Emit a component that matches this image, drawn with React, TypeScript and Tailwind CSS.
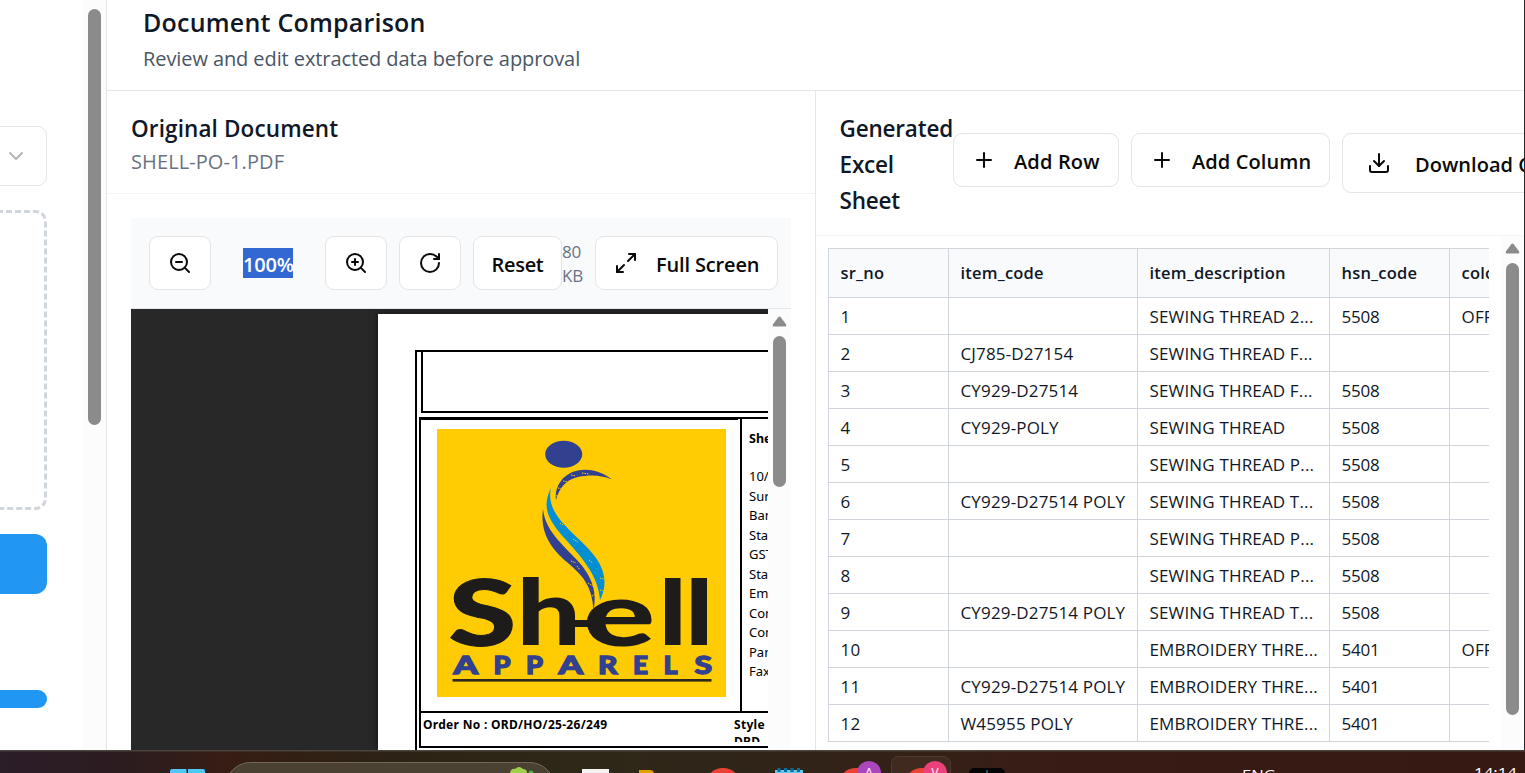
import React from "react";
import { ZoomIn, ZoomOut, RotateCw, Maximize2, Plus, Download, ChevronDown } from "lucide-react";

const rows: string[][] = [
  ["1", "", "SEWING THREAD 2...", "5508", "OFF"],
  ["2", "CJ785-D27154", "SEWING THREAD F...", "", ""],
  ["3", "CY929-D27514", "SEWING THREAD F...", "5508", ""],
  ["4", "CY929-POLY", "SEWING THREAD", "5508", ""],
  ["5", "", "SEWING THREAD P...", "5508", ""],
  ["6", "CY929-D27514 POLY", "SEWING THREAD T...", "5508", ""],
  ["7", "", "SEWING THREAD P...", "5508", ""],
  ["8", "", "SEWING THREAD P...", "5508", ""],
  ["9", "CY929-D27514 POLY", "SEWING THREAD T...", "5508", ""],
  ["10", "", "EMBROIDERY THRE...", "5401", "OFF"],
  ["11", "CY929-D27514 POLY", "EMBROIDERY THRE...", "5401", ""],
  ["12", "W45955 POLY", "EMBROIDERY THRE...", "5401", ""],
];

const heads = ["sr_no", "item_code", "item_description", "hsn_code", "color"];

function Arrow() {
  return (
    <svg width="15" height="11" viewBox="0 0 15 11" className="block shrink-0">
      <path d="M6.3 1.2Q7.5 -.2 8.7 1.2L14 8.2Q15 10.5 13 10.5H2Q0 10.5 1 8.2Z" fill="#8b8b8b" />
    </svg>
  );
}

function Btn({ className, children }: { className: string; children: React.ReactNode }) {
  return (
    <button className={"flex shrink-0 items-center rounded-[9px] border border-[#e5e5e5] bg-white text-[20px] font-semibold whitespace-nowrap text-[#0a0a0a] " + className}>
      {children}
    </button>
  );
}

function Logo() {
  return (
    <svg width="289" height="268" viewBox="437 429 289 268" className="block">
      <rect x="437" y="429" width="289" height="268" fill="#ffcb03" />
      <ellipse cx="563.7" cy="454.3" rx="18.5" ry="13.5" fill="#32418f" />
      <path d="M556 500C554 485 565 471 582 470C595 469 604 474 612 479.500C602 475.500 594 475 585 476C568 477 560 486 556 500Z" fill="#32418f" />
      <path d="M551 488C540 510 551 523 567 541C584 560 598 576 600 600C607 587 606 572 596 558C580 535 544 517 551 488Z" fill="#048fd3" />
      <path d="M543 509C540 532 550 548 568 563C582 575 592 585 593.500 610C598 590 590 574 577 560C562 544 545 530 543 509Z" fill="#32418f" />
      <path d="M556 496l3-1M558 488l5 1M563 481l5 1M571 475l5 1M582 473l7 1M571 561l5 2M577 566l3 4M588 583l5 3M592 596l4-2M560 523l3 2M573 539l5 3M589 560l4 3M600 578l4 1M600 590l5 1" stroke="#ffcb03" strokeWidth="1" strokeDasharray="1.5 1" />
      <g fill="#1d1c1a" stroke="#1d1c1a" strokeWidth="1" fontFamily="Lato" fontWeight="900">
        <text transform="translate(448.500 645.5) scale(1.35 1)" fontSize="91">S</text>
        <text transform="translate(516.500 645) scale(1.25 1)" fontSize="91" stroke="none">h</text>
        <text transform="translate(583 645.5) scale(1.5 1)" fontSize="90" stroke="none">e</text>
      </g>
      <path d="M574 620H600V627H574ZM665 578H680.500V645H665ZM691.500 578H707V645H691.500Z" fill="#1d1c1a" />
      <g fill="#32418f" stroke="#32418f" strokeWidth="1.3" fontFamily="Lato" fontWeight="900" fontSize="24.5">
        {["A", "P", "P", "A", "R", "E", "L", "S"].map((c, i) => (
          <text key={i} x={[453.500, 493.500, 526, 558.500, 598, 633, 663.500, 694.500][i]} y="674" textLength={[24.5, 17, 17, 24.5, 19.5, 15, 14, 17.5][i]} lengthAdjust="spacingAndGlyphs">{c}</text>
        ))}
      </g>
      <rect x="452.500" y="679" width="259" height="2.600" fill="#2b2720" />
    </svg>
  );
}

function Page() {
  const address = ["10/", "Sur", "Ban", "Stat", "GST", "Stat", "Ema", "Con", "Con", "Pan", "Fax"];
  return (
    <div className="mt-[5px] ml-[247px] h-[436px] w-[390px] shrink-0 overflow-hidden bg-white pt-[36px] pl-[37px] font-['Noto_Sans',sans-serif] text-[12px] text-black shadow-[0_0_8px_rgba(0,0,0,0.5)]">
      <div className="h-[420px] w-[500px] border-t-2 border-l-2 border-black pl-[2px]">
        <div className="ml-[2px] h-[61px] border-b-2 border-l-2 border-black" />
        <div className="mt-[4px] flex h-[296px] border-y-[2px] border-l-2 border-black">
          <div className="h-full w-[321px] shrink-0 border-r-2 border-black">
            <div className="h-[10px] w-[317px] border-t border-black" />
            <div className="pl-[16px]"><Logo /></div>
          </div>
          <div className="pt-[12px] pl-[7px]">
            <div className="h-[35px] text-[12.5px] leading-[16px] font-bold">Shell</div>
            {address.map((a, i) => (
              <div key={i} className="h-[19.5px] pt-[2px] text-[13px] leading-[17px]">{a}</div>
            ))}
          </div>
        </div>
        <div className="flex h-[35px] overflow-hidden border-b-2 border-l-2 border-black pt-[3px] pl-[2px] text-[12px] leading-[17px] font-bold tracking-[0.3px]">
          <div className="w-[311px] shrink-0">Order No : ORD/HO/25-26/249</div>
          <div className="h-[26px] overflow-hidden whitespace-nowrap">Style :<br />DBD</div>
        </div>
      </div>
    </div>
  );
}

function Sidebar() {
  return (
    <aside className="flex w-[107px] shrink-0 justify-between border-r border-[#e4e4e4] bg-white">
      <div className="flex w-[47px] flex-col">
        <div className="mt-[126px] -ml-4 flex h-[60px] w-[63px] items-center justify-end rounded-[9px] border border-[#e5e5e5] pr-[18px]">
          <ChevronDown size={24} strokeWidth={2} color="#b5b5b5" />
        </div>
        <svg width="47" height="300" className="mt-[24px] block">
          <rect x="-40" y="1.5" width="85.500" height="297" rx="10" fill="none" stroke="#d1d5dc" strokeWidth="3" strokeDasharray="6 3" />
        </svg>
        <div className="mt-[24px] h-[60px] rounded-r-[12px] bg-[#2196f3]" />
        <div className="mt-[96px] h-[18px] rounded-r-full bg-[#2196f3]" />
      </div>
      <div className="w-[23px] bg-[#fcfcfc] pt-[9px] pl-[5px]">
        <div className="h-[416px] w-[13px] rounded-full bg-[#8b8b8b]" />
      </div>
    </aside>
  );
}

function OriginalPanel() {
  return (
    <section className="flex w-[708px] shrink-0 flex-col bg-white">
      <div className="h-[103px] border-b border-[#f3f4f6] pt-[20px] pl-[24px]">
        <h2 className="text-[22.5px] leading-[36px] font-semibold tracking-[0.12px] text-[#101828]">Original Document</h2>
        <p className="text-[20px] leading-[30px] tracking-[0.1px] text-[#6a7282]">SHELL-PO-1.PDF</p>
      </div>
      <div className="mt-[24px] ml-[24px] w-[660px]">
        <div className="flex h-[91px] items-center border-b border-[#e5e7eb] bg-[#f9fafb] pl-[18px]">
          <Btn className="h-[54px] w-[62px] justify-center"><ZoomOut size={24} strokeWidth={2} /></Btn>
          <div className="flex w-[114px] justify-center">
            <span className="h-[30px] w-[50px] bg-[#3367d1] text-[20px] leading-[33px] font-semibold tracking-[-0.2px] text-white">100%</span>
          </div>
          <Btn className="h-[54px] w-[62px] justify-center"><ZoomIn size={24} strokeWidth={2} /></Btn>
          <Btn className="ml-[12px] h-[54px] w-[62px] justify-center"><RotateCw size={24} strokeWidth={2} /></Btn>
          <Btn className="ml-[12px] h-[54px] w-[89px] justify-center pt-[3px] tracking-[-0.3px]">Reset</Btn>
          <div className="w-[33px] pt-[1px] text-[17px] leading-[24px] tracking-[-0.2px] text-[#6a7282]">80<br />KB</div>
          <Btn className="h-[54px] w-[183px] pl-[18px]"><Maximize2 size={24} strokeWidth={2} /><span className="ml-[18px] pt-[3px] tracking-[-0.15px]">Full Screen</span></Btn>
        </div>
        <div className="flex h-[441px]">
          <div className="flex w-[637px] overflow-hidden bg-[#282828]"><Page /></div>
          <div className="flex w-[23px] flex-col items-center bg-[#fcfcfc] pt-[7px]">
            <Arrow />
            <div className="mt-[9px] h-[151px] w-[13px] rounded-full bg-[#8b8b8b]" />
          </div>
        </div>
      </div>
    </section>
  );
}

function SheetPanel() {
  return (
    <section className="flex w-[709px] shrink-0 flex-col overflow-hidden border-l border-[#e5e7eb] bg-white">
      <div className="flex h-[145px] shrink-0 border-b border-[#f3f4f6] pl-[23.5px]">
        <h2 className="w-[113.5px] shrink-0 pt-[20px] text-[22.5px] leading-[36px] font-semibold tracking-[-0.18px] text-[#101828]">Generated Excel Sheet</h2>
        <div className="flex shrink-0 items-start gap-[12px] pt-[42px]">
          <Btn className="h-[54px] w-[166px] pl-[18px]"><Plus size={24} strokeWidth={2} /><span className="ml-[18px] pt-[3px] tracking-[0.15px]">Add Row</span></Btn>
          <Btn className="h-[54px] w-[199px] pl-[18px]"><Plus size={24} strokeWidth={2} /><span className="ml-[18px] pt-[3px] tracking-[0.1px]">Add Column</span></Btn>
          <Btn className="h-[60px] w-[240px] pl-[24px]"><Download size={24} strokeWidth={2} /><span className="ml-[24px] pt-[3px] tracking-[0.05px]">Download CSV</span></Btn>
        </div>
      </div>
      <div className="flex flex-1 justify-between">
        <div className="mt-[12px] ml-[12px] h-[494px] w-[661px] overflow-hidden">
          <table className="w-[800px] table-fixed border-collapse text-left text-[#101828]">
            <colgroup>
              <col className="w-[120px]" /><col className="w-[189px]" /><col className="w-[192px]" /><col className="w-[120px]" /><col className="w-[179px]" />
            </colgroup>
            <thead>
              <tr className="h-[49px] bg-[#f9fafb] text-[16.5px] tracking-[0.2px]">
                {heads.map((h) => <th key={h} className="border border-[#d1d5dc] p-0 pt-[1px] pl-[11.5px] font-semibold">{h}</th>)}
              </tr>
            </thead>
            <tbody className="text-[17px] leading-[24px]">
              {rows.map((r) => (
                <tr key={r[0]} className="h-[37px]">
                  {r.map((c, i) => <td key={i} className={"border border-[#d1d5dc] p-0 pt-[1px] pl-[11.5px] whitespace-nowrap " + (i === 3 ? "tracking-[-0.2px]" : "tracking-[0.16px]")}>{c}</td>)}
                </tr>
              ))}
            </tbody>
          </table>
        </div>
        <div className="flex w-[23px] flex-col items-center bg-[#fcfcfc] pt-[7px]">
          <Arrow />
          <div className="mt-[9px] h-[452px] w-[13px] rounded-full bg-[#8b8b8b]" />
        </div>
      </div>
    </section>
  );
}

function Taskbar() {
  return (
    <footer className="h-[23px] w-[1525px] overflow-hidden">
      <svg width="1525" height="23" viewBox="0 750 1525 23" className="block font-['Open_Sans',sans-serif]">
        <defs>
          <linearGradient id="bar">
            <stop offset="0" stopColor="#2b1d29" /><stop offset=".08" stopColor="#2c1c20" /><stop offset=".15" stopColor="#371d14" />
            <stop offset=".25" stopColor="#2c2215" /><stop offset=".38" stopColor="#2e2818" /><stop offset=".5" stopColor="#302419" />
            <stop offset=".62" stopColor="#352016" /><stop offset=".7" stopColor="#391b16" /><stop offset="1" stopColor="#351912" />
          </linearGradient>
        </defs>
        <rect y="750" width="1525" height="23" fill="url(#bar)" />
        <rect y="750" width="1525" height="1.5" fill="#55504a" opacity=".75" />
        <path d="M170 773V771Q170 769 172 769H186.500V773ZM188 773V769H203Q205 769 205 771V773Z" fill="#50c8f5" />
        <rect x="225.500" y="762.500" width="329" height="50" rx="25" fill="#4b4133" stroke="#716a5b" />
        <path d="M510 773Q511 768 515 769Q519 765 523 769Q527 769 527 773Z" fill="#9fd04a" /><circle cx="531" cy="773" r="2.500" fill="#4caf50" />
        <rect x="582" y="769" width="27" height="10" fill="#f5f2f2" />
        <path d="M639 773V770H651Q654 771 654 773Z" fill="#dfa100" />
        <circle cx="723" cy="786" r="18" fill="#ea4335" />
        <path d="M775 773V770H803V773Z" fill="#65c5e8" />
        <path d="M779 768v4M785.500 768v4M792 768v4M798.500 768v4" stroke="#076d9d" strokeWidth="3" />
        <rect x="891.500" y="756.500" width="59" height="30" rx="7" fill="#402a20" stroke="#4f3a31" />
        <circle cx="856" cy="786" r="18" fill="#ea4335" /><circle cx="922" cy="786" r="18" fill="#ea4335" />
        <circle cx="869" cy="773" r="12" fill="#ab47bc" /><circle cx="935" cy="773" r="12" fill="#ec407a" />
        <g fill="#f7d8ef" fontSize="12" fontWeight="600" textAnchor="middle"><text x="869" y="776.500">A</text><text x="935" y="776.500">V</text></g>
        <rect x="969" y="768" width="36" height="20" rx="5" fill="#050505" />
        <path d="M987 770v3" stroke="#3da8b5" />
        <g fill="#fff" fontSize="15"><text x="1242" y="780" textLength="34" lengthAdjust="spacingAndGlyphs">ENG</text><text x="1474" y="778" textLength="43" lengthAdjust="spacingAndGlyphs">14:14</text></g>
      </svg>
    </footer>
  );
}

export default function App() {
  return (
    <div className="h-[773px] w-[1525px] overflow-hidden bg-white font-['Open_Sans','Noto_Sans',sans-serif]">
      <div className="flex h-[750px] w-full overflow-hidden border-r border-[#25282b]">
        <Sidebar />
        <main className="flex w-[1417px] shrink-0 flex-col">
          <header className="h-[91px] shrink-0 border-b border-[#e5e7eb] pt-[4px] pl-[36px]">
            <h1 className="text-[25px] leading-[36px] font-semibold tracking-[0.22px] text-[#101828]">Document Comparison</h1>
            <p className="pt-[1px] text-[20px] leading-[36px] tracking-[-0.09px] text-[#4a5565]">Review and edit extracted data before approval</p>
          </header>
          <div className="flex flex-1">
            <OriginalPanel />
            <SheetPanel />
          </div>
        </main>
      </div>
      <Taskbar />
    </div>
  );
}
